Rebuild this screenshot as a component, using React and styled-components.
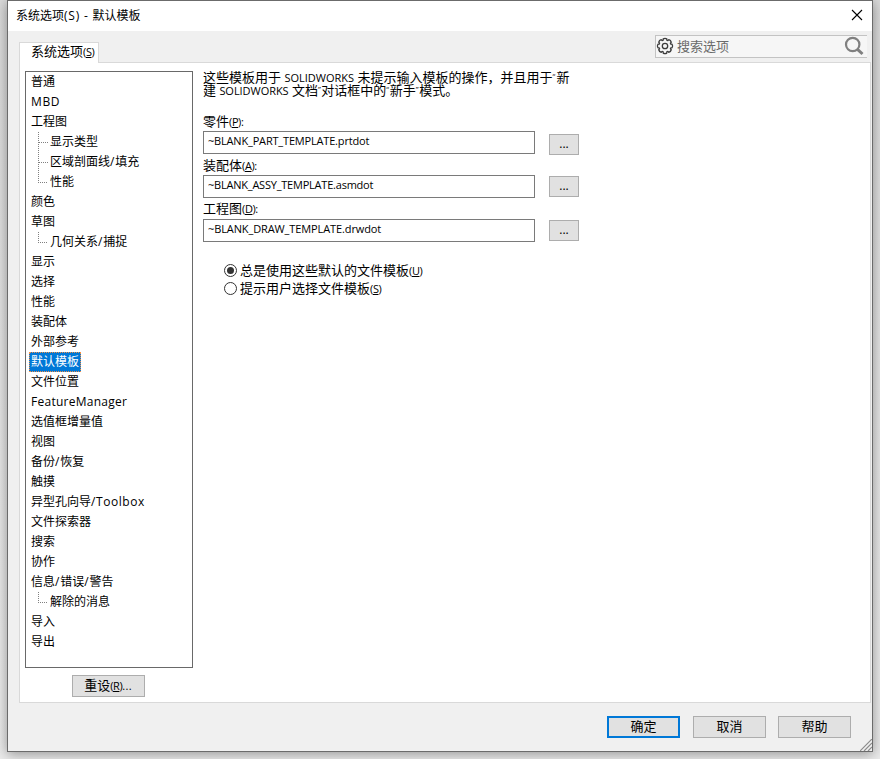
import React from "react";
import styled, { createGlobalStyle, css } from "styled-components";

const Global = createGlobalStyle`
  * { box-sizing: border-box; }
  html, body, #root { height: 100%; }
  body {
    margin: 0;
    overflow: hidden;
    background: #e3e3e3;
    color: #000;
    font: 12px/20px "Open Sans", "Noto Sans CJK SC", sans-serif;
  }
  button, input { font: inherit; color: inherit; }
`;

const Desktop = styled.div`
  width: 880px;
  height: 759px;
  padding-left: 7px;
  overflow: hidden;
  background: linear-gradient(#dadada, #e6e6e6 60%, #ebebeb);
`;

const Dialog = styled.div`
  position: relative;
  display: flex;
  flex-direction: column;
  width: 866px;
  height: 752px;
  border: 1px solid #6b6b6b;
  background: #f0f0f0;
  box-shadow: 0 2px 12px rgba(0, 0, 0, 0.38);
`;

const TitleBar = styled.header`
  display: flex;
  flex: none;
  align-items: center;
  justify-content: space-between;
  height: 30px;
  padding: 0 9px 0 8px;
  background: #fff;
`;

const Title = styled.span`
  white-space: pre;
`;

const Spaced = styled.span`
  letter-spacing: ${(p) => p.$by};
`;

const CloseButton = styled.button`
  display: flex;
  padding: 0;
  border: 0;
  background: none;
  transform: translateY(-1px);
`;

const TabRow = styled.div`
  display: flex;
  flex: none;
  align-items: flex-end;
  justify-content: space-between;
  height: 31px;
  padding: 0 5px 0 11px;
`;

const Tab = styled.div`
  z-index: 1;
  width: 80px;
  height: 21px;
  margin-bottom: -1px;
  padding-left: 11px;
  border: 1px solid #d9d9d9;
  border-bottom: 0;
  background: #fff;
  font-size: 13px;
  line-height: 17px;
  white-space: nowrap;
`;

const SearchBox = styled.div`
  display: flex;
  align-items: center;
  width: 212px;
  height: 23px;
  margin-bottom: 4px;
  padding: 0 3px 2px 0;
  border: 1px solid #c3c3c3;
  border-right: 0;
  background: #f6f6f6;
`;

const SearchText = styled.span`
  flex: 1;
  margin-left: 3px;
  color: #6a6a6a;
  font-size: 13px;
  line-height: 20px;
`;

const Panel = styled.main`
  display: flex;
  flex: none;
  width: 852px;
  height: 641px;
  margin-left: 11px;
  padding: 8px 5px 0;
  border: 1px solid #d9d9d9;
  background: #fff;
`;

const Sidebar = styled.nav`
  display: flex;
  flex-direction: column;
  gap: 7px;
  width: 168px;
`;

const Tree = styled.ul`
  width: 168px;
  height: 597px;
  margin: 0;
  padding: 0 0 0 3px;
  border: 1px solid #696969;
  list-style: none;
`;

const TreeRow = styled.li`
  display: flex;
  height: 20px;
  padding-left: ${(p) => (p.$child ? "9px" : "0")};
`;

const Branch = styled.svg`
  display: block;
  width: 10px;
  height: 20px;
  stroke: #808080;
  fill: none;
  stroke-dasharray: 1 1;
`;

const TreeLabel = styled.span`
  height: 20px;
  padding: 0 1px 0 2px;
  line-height: 19px;
  white-space: nowrap;
  ${(p) =>
    p.$selected &&
    css`
      padding: 0 1px;
      border: 1px dotted #f0914a;
      background: #0078d7;
      color: #fff;
      line-height: 17px;
    `}
`;

const Button = styled.button`
  display: block;
  flex: none;
  width: 73px;
  height: 22px;
  padding: 0 0 2px;
  border: 1px solid #adadad;
  background: #e1e1e1;
  font-size: 13px;
  line-height: 18px;
  ${(p) =>
    p.$primary &&
    css`
      margin-right: 1px;
      border: 2px solid #0078d7;
      line-height: 16px;
    `}
`;

const ResetButton = styled(Button)`
  margin-left: 47px;
  padding-right: 1px;
`;

const Content = styled.section`
  width: 400px;
  margin-left: 10px;
  font-size: 13px;
`;

const Intro = styled.p`
  height: 43px;
  margin: 0;
  line-height: 13px;
  white-space: nowrap;
`;

const Latin = styled.span`
  font-size: 11px;
  letter-spacing: ${(p) => p.$spacing || "0"};
`;

const Quote = styled.span`
  display: inline-block;
  width: ${(p) => p.$width || "3.4px"};
  font-size: 8px;
  line-height: 10px;
  vertical-align: top;
`;

const Key = styled.span`
  font-size: 11px;
  letter-spacing: -0.4px;
  u { text-underline-offset: 1px; }
`;

const Tail = styled.span`
  letter-spacing: 0.3px;
`;

const Field = styled.div`
  display: flex;
  align-items: flex-end;
  gap: 14px;
  height: ${(p) => p.$height};
`;

const FieldMain = styled.label`
  display: block;
  width: 332px;
`;

const FieldLabel = styled.span`
  display: block;
  height: ${(p) => p.$height};
  line-height: 17px;
`;

const Input = styled.input`
  display: block;
  width: 332px;
  height: 23px;
  padding: 0 4px 4px;
  border: 1px solid #7a7a7a;
  border-radius: 0;
  background: #fff;
  font-size: 11px;
  letter-spacing: ${(p) => p.$spacing};
`;

const Browse = styled(Button)`
  width: 30px;
  height: 21px;
  margin-bottom: ${(p) => p.$drop};
  padding-bottom: 1px;
  font-size: 12px;
`;

const Radios = styled.div`
  display: flex;
  flex-direction: column;
  margin: 19px 0 0 21px;
`;

const RadioRow = styled.label`
  display: flex;
  align-items: center;
  gap: 3px;
  height: 18px;
  line-height: 18px;
  white-space: nowrap;
`;

const RadioMark = styled.span`
  display: flex;
  align-items: center;
  justify-content: center;
  width: 13px;
  height: 13px;
  border: 1px solid #333;
  border-radius: 50%;
  &::after {
    content: "";
    width: 7px;
    height: 7px;
    border-radius: 50%;
    background: ${(p) => (p.$checked ? "#333" : "transparent")};
  }
`;

const Footer = styled.footer`
  display: flex;
  justify-content: flex-end;
  gap: 12px;
  padding: 13px 21px 0 0;
`;

const Grip = styled.svg`
  position: absolute;
  right: 0;
  bottom: 0;
`;

const items = [
  { text: "普通" },
  { latin: "MBD", spacing: "0.6px" },
  { text: "工程图" },
  { text: "显示类型", child: true, more: true },
  { text: "区域剖面线", latin: "/", spacing: "0.8px", rest: "填充", child: true, more: true },
  { text: "性能", child: true },
  { text: "颜色" },
  { text: "草图" },
  { text: "几何关系", latin: "/", spacing: "0.8px", rest: "捕捉", child: true },
  { text: "显示" },
  { text: "选择" },
  { text: "性能" },
  { text: "装配体" },
  { text: "外部参考" },
  { text: "默认模板", selected: true },
  { text: "文件位置" },
  { latin: "FeatureManager", spacing: "0.26px" },
  { text: "选值框增量值" },
  { text: "视图" },
  { text: "备份", latin: "/", spacing: "0.8px", rest: "恢复" },
  { text: "触摸" },
  { text: "异型孔向导", latin: "/Toolbox", spacing: "0.55px" },
  { text: "文件探索器" },
  { text: "搜索" },
  { text: "协作" },
  { text: "信息", latin: "/", spacing: "0.8px", rest: "错误", latin2: "/", rest2: "警告" },
  { text: "解除的消息", child: true },
  { text: "导入" },
  { text: "导出" },
];

const fields = [
  { label: "零件", k: "P", value: "~BLANK_PART_TEMPLATE.prtdot", spacing: "-0.18px", height: "40px", labelHeight: "18px", drop: "-1px" },
  { label: "装配体", k: "A", value: "~BLANK_ASSY_TEMPLATE.asmdot", spacing: "-0.22px", height: "44px", labelHeight: "18px", drop: "1px" },
  { label: "工程图", k: "D", value: "~BLANK_DRAW_TEMPLATE.drwdot", spacing: "-0.11px", height: "44px", labelHeight: "19px", drop: "1px" },
];

function Mnemonic({ letter, tail = "" }) {
  return <Key>(<u>{letter}</u>)<Tail>{tail}</Tail></Key>;
}

function GearIcon() {
  const d = Array.from({ length: 8 }, (_, i) => {
    const at = (deg, r) => {
      const a = (deg * Math.PI) / 180;
      return `${(9 + r * Math.cos(a)).toFixed(2)} ${(9 + r * Math.sin(a)).toFixed(2)}`;
    };
    const b = i * 45;
    return `${i ? "L" : "M"}${at(b - 17, 6.1)}L${at(b - 14, 7.3)}Q${at(b, 8.2)} ${at(b + 14, 7.3)}L${at(b + 17, 6.1)}`;
  }).join("");
  return (
    <svg width="18" height="18" viewBox="0 0 18 18" fill="none" stroke="#3c3c3c" strokeWidth="1.3" strokeLinejoin="round">
      <path d={d + "Z"} />
      <circle cx="9" cy="9" r="2.7" />
    </svg>
  );
}

export default function App() {
  return (
    <>
      <Global />
      <Desktop>
        <Dialog>
          <TitleBar>
            <Title>系统选项<Spaced $by="0.8px">(S) - </Spaced>默认模板</Title>
            <CloseButton aria-label="关闭">
              <svg width="12" height="12" viewBox="0 0 12 12" stroke="#000" strokeWidth="1.1">
                <path d="M1 1l10 10M11 1L1 11" />
              </svg>
            </CloseButton>
          </TitleBar>
          <TabRow>
            <Tab>系统选项<Mnemonic letter="S" /></Tab>
            <SearchBox>
              <GearIcon />
              <SearchText>搜索选项</SearchText>
              <svg width="20" height="20" viewBox="0 0 20 20" fill="none" stroke="#808080">
                <circle cx="8.7" cy="8.5" r="6.7" strokeWidth="2.2" />
                <path d="M13.5 13.3l5 4.7" strokeWidth="3" />
              </svg>
            </SearchBox>
          </TabRow>
          <Panel>
            <Sidebar>
              <Tree>
                {items.map((it, i) => (
                  <TreeRow key={i} $child={it.child}>
                    {it.child && (
                      <Branch viewBox="0 0 10 20">
                        <path d={it.more ? "M.5 0V20M1 10.5H10" : "M.5 0V10M0 10.5H10"} />
                      </Branch>
                    )}
                    <TreeLabel $selected={it.selected}>
                      {it.text}
                      {it.latin && <Spaced $by={it.spacing}>{it.latin}</Spaced>}
                      {it.rest}
                      {it.latin2 && <Spaced $by={it.spacing}>{it.latin2}</Spaced>}
                      {it.rest2}
                    </TreeLabel>
                  </TreeRow>
                ))}
              </Tree>
              <ResetButton>重设<Mnemonic letter="R" tail="..." /></ResetButton>
            </Sidebar>
            <Content>
              <Intro>
                这些模板用于 <Latin>SOLIDWORKS</Latin> 未提示输入模板的操作，并且用于<Quote $width="4px">“</Quote>新
                <br />
                建 <Latin $spacing="-0.05px">SOLIDWORKS</Latin> 文档<Quote>”</Quote>对话框中的<Quote>“</Quote>新手<Quote>”</Quote>模式。
              </Intro>
              {fields.map((f) => (
                <Field key={f.k} $height={f.height}>
                  <FieldMain>
                    <FieldLabel $height={f.labelHeight}>
                      {f.label}<Mnemonic letter={f.k} tail=":" />
                    </FieldLabel>
                    <Input defaultValue={f.value} $spacing={f.spacing} />
                  </FieldMain>
                  <Browse $drop={f.drop}>...</Browse>
                </Field>
              ))}
              <Radios>
                <RadioRow><RadioMark $checked /><span>总是使用这些默认的文件模板<Mnemonic letter="U" /></span></RadioRow>
                <RadioRow><RadioMark /><span>提示用户选择文件模板<Mnemonic letter="S" /></span></RadioRow>
              </Radios>
            </Content>
          </Panel>
          <Footer>
            <Button $primary>确定</Button>
            <Button>取消</Button>
            <Button>帮助</Button>
          </Footer>
          <Grip width="12" height="12" viewBox="0 0 12 12" stroke="#8c8c8c" strokeWidth="1.2">
            <path d="M0 12L12 0M4 12L12 4M8 12L12 8" />
          </Grip>
        </Dialog>
      </Desktop>
    </>
  );
}
